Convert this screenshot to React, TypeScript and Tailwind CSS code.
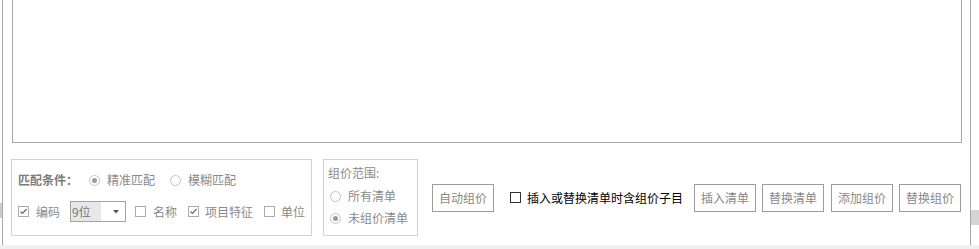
function Radio({ checked }: { checked?: boolean }) {
  return (
    <span className="flex h-[11px] w-[11px] shrink-0 items-center justify-center rounded-full border border-[#c4c4c4] bg-white">
      {checked && <span className="h-[5px] w-[5px] rounded-full bg-[#9c9c9c]" />}
    </span>
  );
}

function Check({ checked, dark }: { checked?: boolean; dark?: boolean }) {
  return (
    <span
      className={
        dark
          ? "flex h-[11px] w-[11px] shrink-0 items-center justify-center border border-[#333333] bg-white"
          : "flex h-[11px] w-[11px] shrink-0 items-center justify-center border border-[#ababab] bg-white"
      }
    >
      {checked && (
        <svg width="9" height="9" viewBox="0 0 9 9">
          <polyline points="1.5,4.5 3.5,6.5 7.5,2" fill="none" stroke="#6a6a6a" strokeWidth="1.2" />
        </svg>
      )}
    </span>
  );
}

function Btn({ label, className = "" }: { label: string; className?: string }) {
  return (
    <div
      className={`flex h-[28px] w-[62px] shrink-0 items-center justify-center border border-[#9c9c9c] bg-white text-[#888888] ${className}`}
    >
      {label}
    </div>
  );
}

export default function App() {
  return (
    <div className="relative h-[249px] w-[979px] overflow-hidden bg-white font-['Noto_Sans_CJK_SC','Microsoft_YaHei',sans-serif] text-[12px] leading-[16px] text-[#8a8a8a]">
      <div className="ml-[2px] flex h-[245px] w-[969px] flex-col border-x border-[#a8a8a8]">
        <div className="ml-[9px] h-[143px] w-[950px] shrink-0 border-x border-b border-[#a8a8a8]" />

        <div className="mt-[16px] flex items-center">
          {/* 匹配条件 */}
          <div className="ml-[8px] h-[77px] w-[301px] shrink-0 border border-[#d2d2d2] pl-[6px] pt-[10px]">
            <div className="flex h-[20px] items-center">
              <span className="w-[71px] font-bold text-[#7c7c7c]">匹配条件：</span>
              <Radio checked />
              <span className="ml-[7px]">精准匹配</span>
              <span className="ml-[15px]">
                <Radio />
              </span>
              <span className="ml-[7px]">模糊匹配</span>
            </div>
            <div className="mt-[11px] flex h-[21px] items-center">
              <Check checked />
              <span className="ml-[7px]">编码</span>
              <div className="ml-[10px] flex h-[21px] w-[56px] items-center border border-[#a2a2a2] bg-white">
                <span className="flex h-full w-[30px] items-center bg-[#e8e8e8] pl-[1px] text-[#777777]">9位</span>
                <svg className="ml-auto mr-[6px]" width="6" height="4" viewBox="0 0 6 4">
                  <polygon points="0,0 6,0 3,3.5" fill="#555555" />
                </svg>
              </div>
              <span className="ml-[9px]">
                <Check />
              </span>
              <span className="ml-[7px]">名称</span>
              <span className="ml-[11px]">
                <Check checked />
              </span>
              <span className="ml-[6px]">项目特征</span>
              <span className="ml-[11px]">
                <Check />
              </span>
              <span className="ml-[6px]">单位</span>
            </div>
          </div>

          {/* 组价范围 */}
          <div className="ml-[11px] h-[77px] w-[95px] shrink-0 border border-[#d2d2d2] pl-[4px] pt-[5px]">
            <div className="h-[16px]">组价范围:</div>
            <div className="mt-[7px] flex h-[16px] items-center pl-[2px]">
              <Radio />
              <span className="ml-[7px]">所有清单</span>
            </div>
            <div className="mt-[6px] flex h-[16px] items-center pl-[2px]">
              <Radio checked />
              <span className="ml-[7px]">未组价清单</span>
            </div>
          </div>

          <Btn label="自动组价" className="ml-[14px]" />

          <span className="ml-[16px]">
            <Check dark />
          </span>
          <span className="ml-[6px] text-black">插入或替换清单时含组价子目</span>

          <Btn label="插入清单" className="ml-[11px]" />
          <Btn label="替换清单" className="ml-[6px]" />
          <Btn label="添加组价" className="ml-[7px]" />
          <Btn label="替换组价" className="ml-[6px]" />
        </div>
      </div>
      <div className="h-[4px] bg-[#f0f0f0]" />

      <div className="absolute left-0 top-[203px] h-[15px] w-[2px] bg-[#cccccc]" />
      <div className="absolute right-0 top-[210px] h-[15px] w-[8px] bg-[#d4d4d4]" />
    </div>
  );
}
